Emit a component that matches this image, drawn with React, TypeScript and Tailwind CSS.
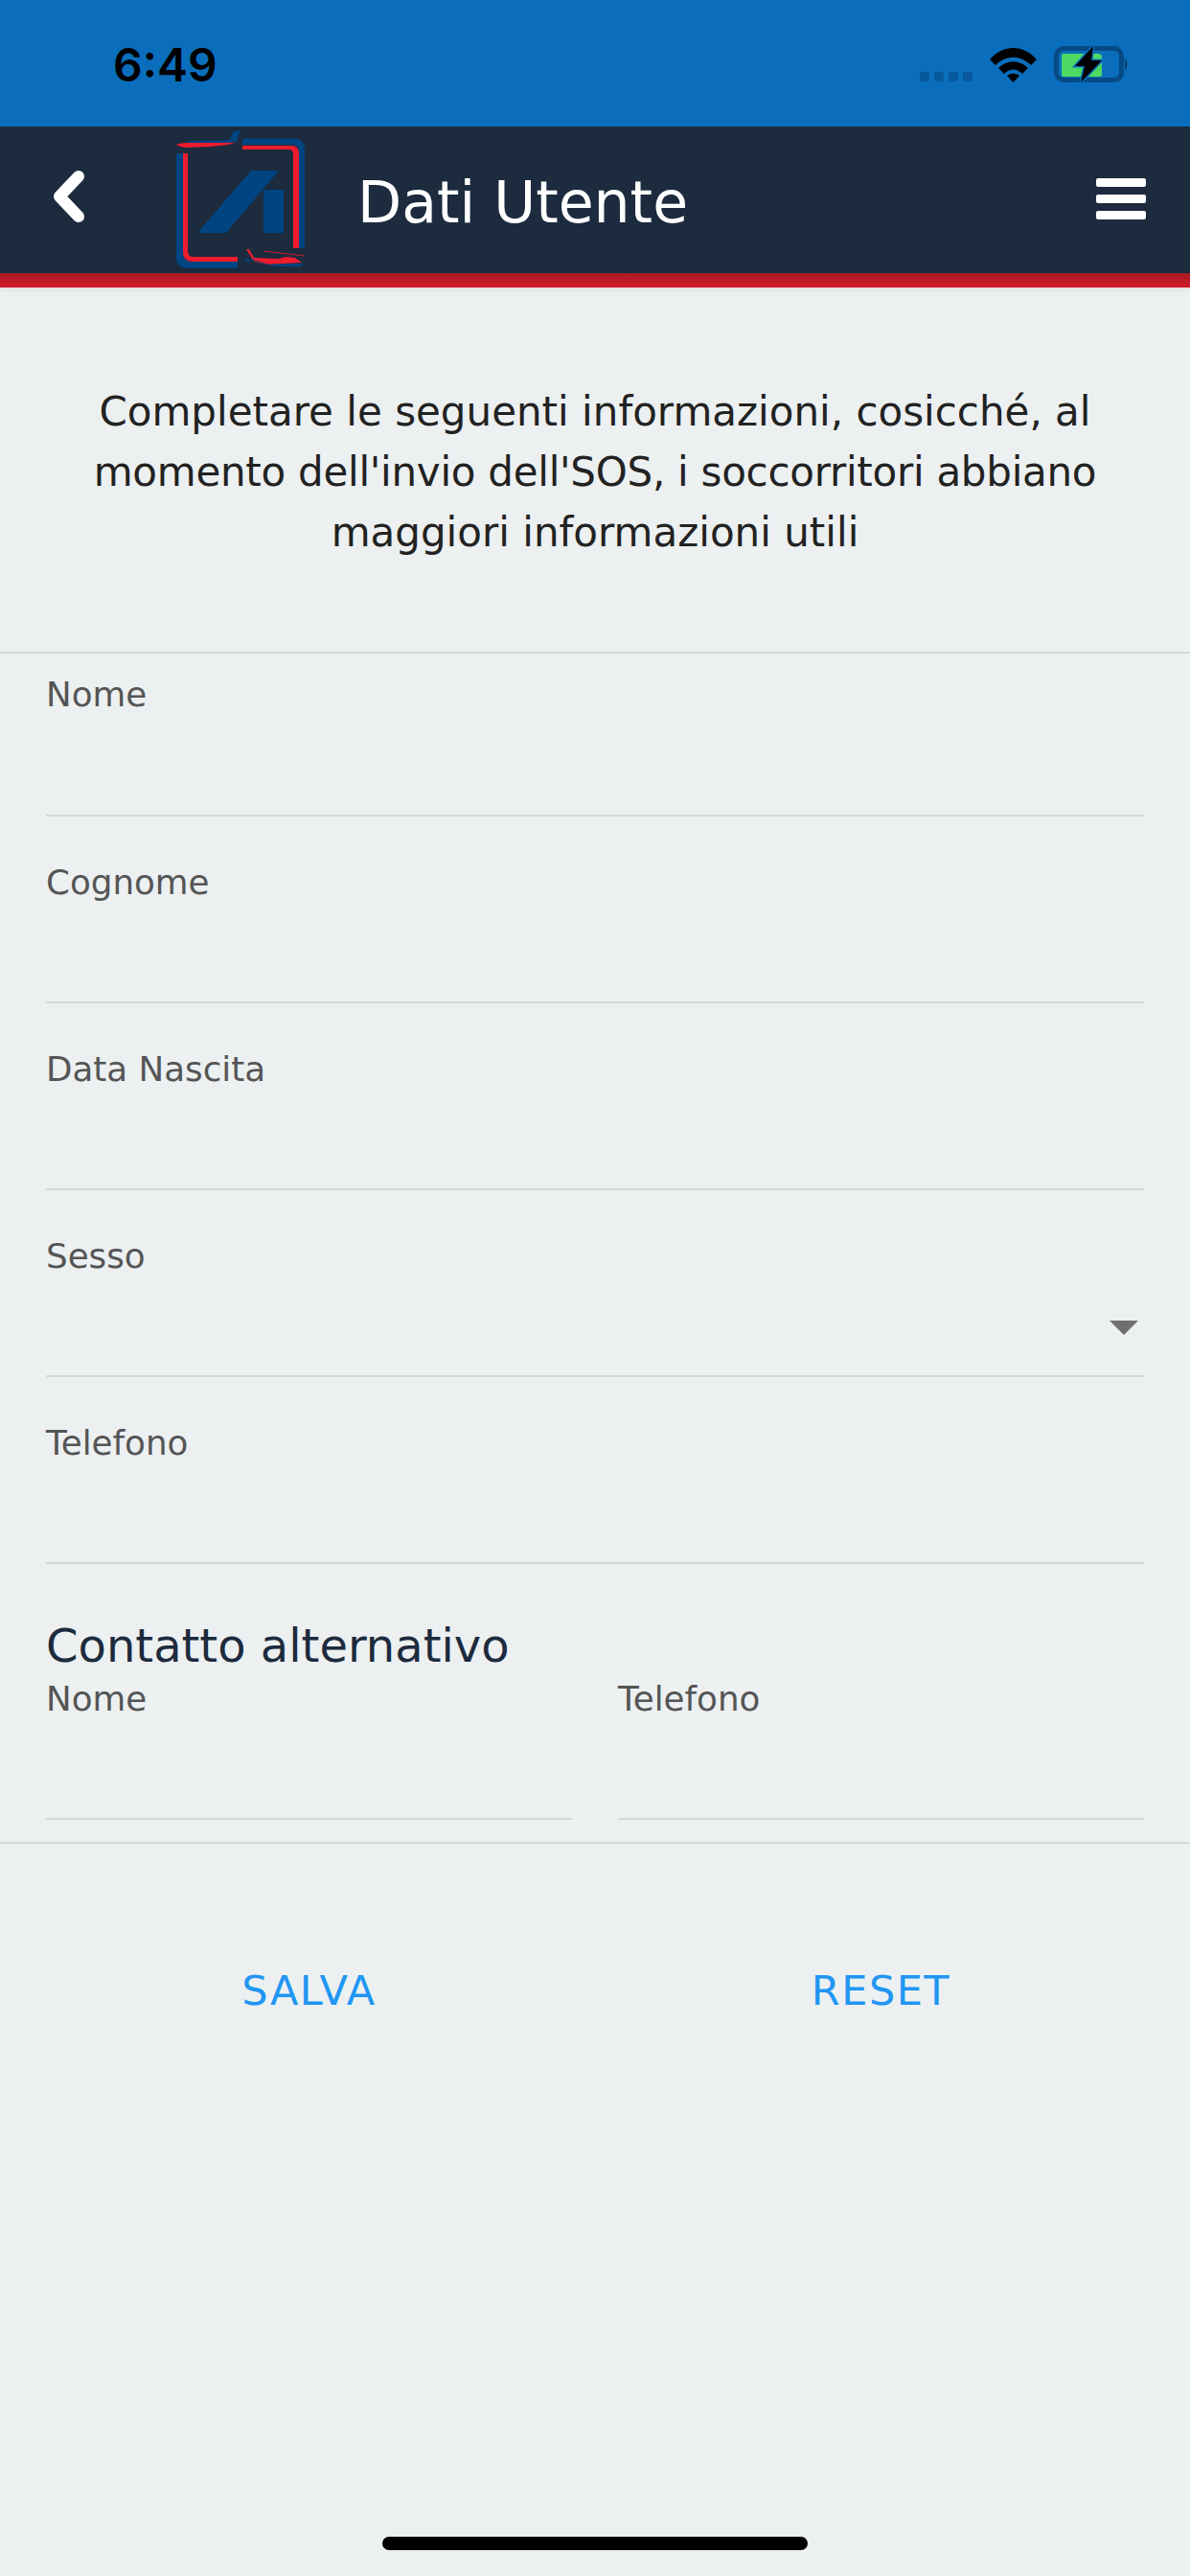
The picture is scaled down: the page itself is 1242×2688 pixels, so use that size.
import React from 'react';

// ─── Small drawings ─────────────────────────────────────────────────────────

const WifiIcon = () => (
  <svg width="49" height="36" viewBox="0 0 49 36" fill="#000">
    <path d="M0 12 C14 -4 35 -4 49 12 L43 18 C32 7 17 7 6 18 Z" />
    <path d="M9 21 C18 12 31 12 40 21 L34 27 C28 21 21 21 15 27 Z" />
    <path d="M18 29 C22 26 27 26 31 29 L24.5 36 Z" />
  </svg>
);

const BatteryIcon = () => (
  <svg width="80" height="40" viewBox="0 0 80 40">
    <rect x="2.5" y="2.5" width="68" height="33" rx="8" fill="none" stroke="#064a85" strokeWidth="5" />
    <path d="M74 12 Q79 19 74 26 Z" fill="#063d6e" />
    <path d="M8 10 Q8 8 10 8 H46 Q50 8 50 12 V30 Q50 32 47 32 H10 Q8 32 8 30 Z" fill="#4cd964" />
    <path d="M41 0 L22 21 H32 L28 38 L50 15 H39 Z" fill="#000" stroke="#0a6ebd" strokeWidth="3" strokeLinejoin="miter" paintOrder="stroke" />
  </svg>
);

const Logo = () => (
  <svg width="180" height="153" viewBox="0 12 180 153" className="shrink-0">
    <path d="M93 24.5 H146 Q158 24.5 158 36 V139 H152 V38 Q152 31 145 31 H93 Z" fill="#004481" />
    <path d="M93 32 H144 Q152 32 152 40 V139 H146 V41 Q146 36 141 36 H93 Z" fill="#ed1c2e" />
    <path d="M24 40 H31 V143 Q31 153 41 153 H88 V160 H36 Q24 160 24 148 Z" fill="#004481" />
    <path d="M31 40 H36 V142 Q36 148 42 148 H88 V153 H42 Q31 153 31 143 Z" fill="#ed1c2e" />
    <path d="M102 58 H131 L76 123 H46 Z" fill="#004481" />
    <rect x="115" y="78" width="21" height="45" fill="#004481" />
    {/* plane */}
    <path d="M78 28 L84 17 L91 16 L87 28 Z" fill="#004481" />
    <path d="M36 27 L80 26 L81 29 L36 29 Z" fill="#004481" />
    <path d="M24 31 Q28 29 36 29 L85 29 L78 31 L60 33 L34 34 Q27 33 24 31 Z" fill="#ed1c2e" />
    {/* helicopter */}
    <path d="M115 142 L158 147" stroke="#ed1c2e" strokeWidth="0.8" />
    <path d="M97 140 L100 140 L105 149 L131 150 L138 148 L148 149 L155 154 L120 156 L105 153 Z" fill="#ed1c2e" />
    <path d="M94 150 L105 152 L125 158 L155 158 L157 155 L120 156 L102 150 L99 155 L97 152 Z" fill="#004481" />
  </svg>
);

// ─── Form pieces ────────────────────────────────────────────────────────────

const Field: React.FC<{ label: string; first?: boolean; select?: boolean }> = ({ label, first, select }) => (
  <div className={`relative border-b-2 border-[#d4d8da] ${first ? 'h-[170px] pt-[20px]' : 'h-[195px] pt-[46px]'}`}>
    <div className="text-[35.7px] leading-[46px] text-[#555]">{label}</div>
    {select && (
      <svg width="30" height="15" viewBox="0 0 30 15" className="absolute right-[6px] top-[136px]">
        <path d="M0 0 H30 L15 15 Z" fill="#6f6f6f" />
      </svg>
    )}
  </div>
);

const MiniField: React.FC<{ label: string }> = ({ label }) => (
  <div className="h-[153px] border-b-2 border-[#d4d8da] pt-[4px]">
    <div className="text-[35.7px] leading-[46px] text-[#555]">{label}</div>
  </div>
);

// ─── Page ───────────────────────────────────────────────────────────────────

export default function App() {
  return (
    <div className="relative flex h-[2688px] w-[1242px] flex-col overflow-hidden bg-[#ecf0f1] font-['DejaVu_Sans',sans-serif]">
      <div className="flex h-[132px] items-center bg-[#0a6ebd]">
        <span className="ml-[118px] mt-[4px] font-['Inter',sans-serif] text-[48px] font-semibold leading-none text-black">6:49</span>
        <div className="ml-auto mr-[62px] mt-[4px] flex items-center">
          <div className="mr-[18px] mt-[24px] flex gap-[5px]">
            <div className="h-[10px] w-[10px] rounded-[3px] bg-[#07589c]" />
            <div className="h-[10px] w-[10px] rounded-[3px] bg-[#07589c]" />
            <div className="h-[10px] w-[10px] rounded-[3px] bg-[#07589c]" />
            <div className="h-[10px] w-[10px] rounded-[3px] bg-[#07589c]" />
          </div>
          <WifiIcon />
          <div className="ml-[18px]">
            <BatteryIcon />
          </div>
        </div>
      </div>

      <div className="flex h-[153px] items-center bg-[#1c2b3d]">
        <svg width="35" height="54" viewBox="0 0 35 54" className="ml-[55px] mt-[-8px] shrink-0">
          <path d="M27 6 L7 27 L27 48" fill="none" stroke="#fff" strokeWidth="12" strokeLinecap="round" strokeLinejoin="round" />
        </svg>
        <div className="ml-[70px]">
          <Logo />
        </div>
        <span className="ml-[33px] mt-[4px] text-[60px] leading-none text-white">Dati Utente</span>
        <div className="ml-auto mr-[46px] mt-[-3px] flex w-[52px] flex-col gap-[8px]">
          <div className="h-[9px] rounded-[2px] bg-white" />
          <div className="h-[9px] rounded-[2px] bg-white" />
          <div className="h-[9px] rounded-[2px] bg-white" />
        </div>
      </div>
      <div className="relative z-10 h-[15px] bg-gradient-to-b from-[#a81a22] to-[#d41c2a] shadow-[0_2px_6px_rgba(0,0,0,0.08)]" />

      <div className="flex h-[382px] items-center justify-center border-b-2 border-[#d4d8da] px-[48px] pt-[5px]">
        <p className="text-center text-[42px] leading-[63px] text-[#222]">
          Completare le seguenti informazioni, cosicché, al
          <br />
          <span className="tracking-[-0.27px]">momento dell'invio dell'SOS, i soccorritori abbiano</span>
          <br />
          maggiori informazioni utili
        </p>
      </div>

      <div className="px-[48px]">
        <Field label="Nome" first />
        <Field label="Cognome" />
        <Field label="Data Nascita" />
        <Field label="Sesso" select />
        <Field label="Telefono" />

        <div className="pt-[56px] text-[48px] leading-[58px] text-[#1c2b3d]">Contatto alternativo</div>
        <div className="grid grid-cols-2 gap-[48px]">
          <MiniField label="Nome" />
          <MiniField label="Telefono" />
        </div>
      </div>
      <div className="mt-[23px] border-b-2 border-[#d4d8da]" />

      <div className="mt-[128px] grid grid-cols-2 gap-[48px] px-[48px] text-center text-[43px] leading-[50px] tracking-[1.5px] text-[#2196f3]">
        <span>SALVA</span>
        <span>RESET</span>
      </div>

      <div className="absolute bottom-[27px] left-[399px] h-[14px] w-[444px] rounded-full bg-black" />
    </div>
  );
}
